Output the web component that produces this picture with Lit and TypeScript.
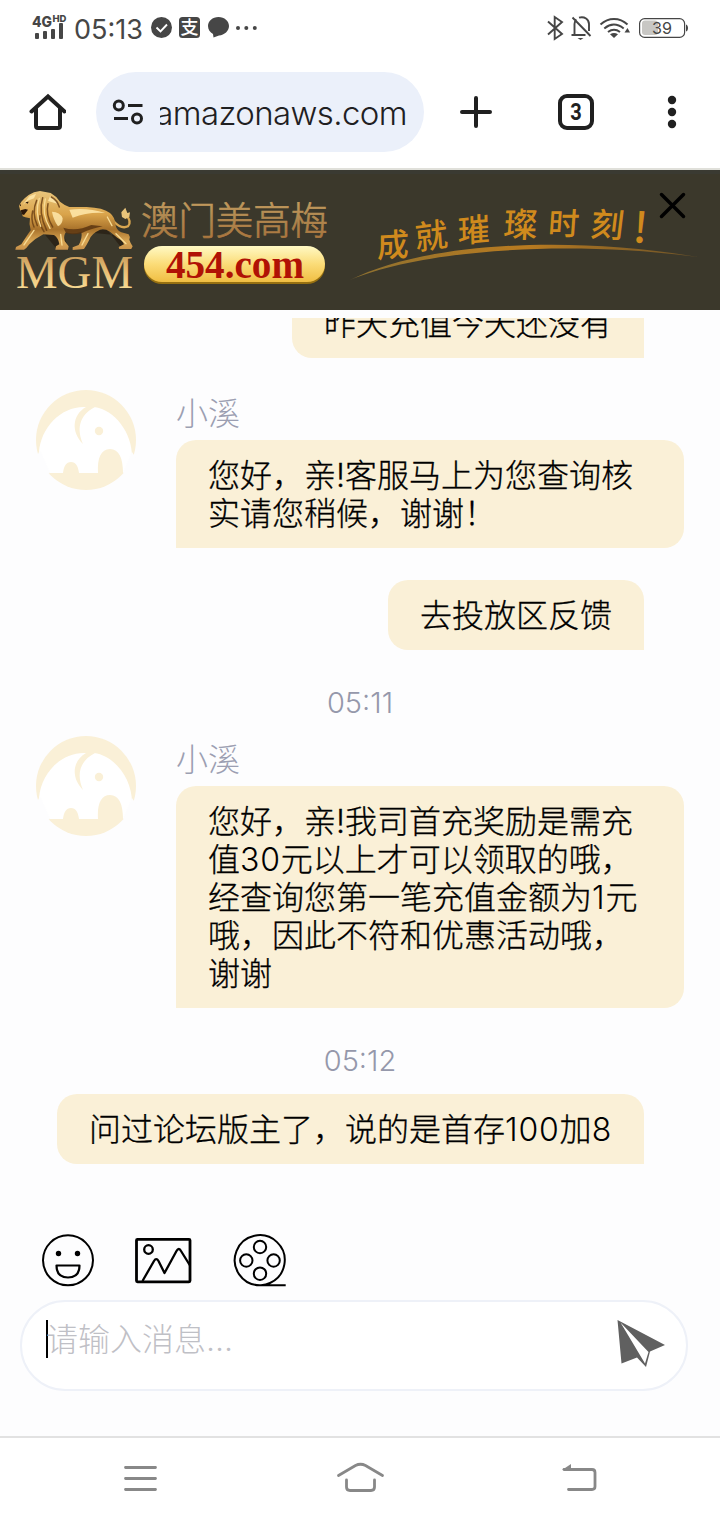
import { LitElement, html, css, svg } from "lit";
import { customElement } from "lit/decorators.js";

type ChatItem =
  | { kind: "agent"; name: string; lines: string[] }
  | { kind: "user"; lines: string[] }
  | { kind: "time"; text: string };

const CHAT: ChatItem[] = [
  { kind: "user", lines: ["昨天充值今天还没有"] },
  {
    kind: "agent",
    name: "小溪",
    lines: ["您好，亲!客服马上为您查询核", "实请您稍候，谢谢！"],
  },
  { kind: "user", lines: ["去投放区反馈"] },
  { kind: "time", text: "05:11" },
  {
    kind: "agent",
    name: "小溪",
    lines: [
      "您好，亲!我司首充奖励是需充",
      "值30元以上才可以领取的哦，",
      "经查询您第一笔充值金额为1元",
      "哦，因此不符和优惠活动哦，",
      "谢谢",
    ],
  },
  { kind: "time", text: "05:12" },
  { kind: "user", lines: ["问过论坛版主了，说的是首存100加8"] },
];

@customElement("status-bar")
export class StatusBar extends LitElement {
  static styles = css`
    :host {
      display: flex;
      justify-content: space-between;
      height: 56px;
      padding: 0 31px 0 31px;
      box-sizing: border-box;
    }
    svg {
      display: block;
    }
    text {
      font-family: Inter, "Noto Sans CJK SC", sans-serif;
      fill: #464646;
    }
    .net {
      font-size: 15px;
      font-weight: 800;
    }
    .hd {
      font-size: 9.5px;
      font-weight: 800;
    }
    .clock {
      font-size: 27px;
      font-weight: 400;
    }
    .pay {
      font-size: 18px;
      font-weight: 500;
      fill: #fff;
    }
    .charge {
      font-size: 16.5px;
    }
  `;

  render() {
    return html`
      <svg width="230" height="56" viewBox="31 0 230 56" fill="#464646">
        <text class="net" x="32" y="26.500" textLength="20" lengthAdjust="spacingAndGlyphs">4G</text>
        <text class="hd" x="52.500" y="22" textLength="14" lengthAdjust="spacingAndGlyphs">HD</text>
        <rect x="35" y="33" width="4" height="6" rx="1" />
        <rect x="43" y="31" width="4" height="8" rx="1" />
        <rect x="51" y="29" width="4" height="10" rx="1" />
        <rect x="59" y="23" width="4" height="16" rx="1" />
        <text class="clock" x="74" y="39" textLength="69" lengthAdjust="spacingAndGlyphs">05:13</text>
        <circle cx="161.500" cy="27.500" r="10.500" />
        <path d="M156.500 27.500l4 4 6.500-7" fill="none" stroke="#fff" stroke-width="1.900" />
        <rect x="179" y="17" width="21" height="21" rx="3.500" />
        <text class="pay" x="180.500" y="34">支</text>
        <path d="M218.500 17c6 0 10.500 4 10.500 9s-4.500 9-10 9.500l-5.500 2-.5-3.500c-3-1.500-5-4.500-5-8 0-5 4.500-9 10.500-9z" />
        <circle cx="238" cy="28" r="2" />
        <circle cx="246.300" cy="28" r="2" />
        <circle cx="254.800" cy="28" r="2" />
      </svg>
      <svg width="150" height="56" viewBox="539 0 150 56" fill="none" stroke="#464646" stroke-width="1.900">
        <path d="M548 21.500l14 12.500-7.300 5V17l7.300 5-14 12.500" />
        <path d="M574.500 35V24c0-2 .7-3.500 1.800-4.700M579 17.600c5.500-1.600 10 1.800 10 6.400v7M571.500 35h14M572.500 17.500l18 18.500" />
        <path d="M577.500 38h6l-3 2z" fill="#464646" stroke="none" />
        <path d="M600.500 24.500c8-7.300 19-7.300 27 0M604.300 28.500c6-5 13-5 19.400 0M608 32c4-3 8-3 12 0" stroke-width="2" />
        <path d="M610 34.200c3-1.600 5-1.600 8 0l-4 3.800z" fill="#464646" stroke="none" />
        <path d="M624.500 32.500l3-4.500 2.500 4.500z" fill="#464646" stroke="none" />
        <rect x="642" y="20.500" width="16" height="14.500" rx="3" fill="#c8c7c4" stroke="none" />
        <rect x="639.600" y="18.600" width="45" height="18.800" rx="5" stroke-width="1.200" />
        <path d="M686 24.500c1.500.5 2 2 2 3.500s-.5 3-2 3.500z" fill="#464646" stroke="none" />
        <text class="charge" x="652" y="34" stroke="none" textLength="20" lengthAdjust="spacingAndGlyphs">39</text>
      </svg>
    `;
  }
}

@customElement("browser-bar")
export class BrowserBar extends LitElement {
  static styles = css`
    :host {
      display: flex;
      align-items: center;
      height: 114px;
      box-sizing: border-box;
      border-bottom: 2px solid #e0e0da;
    }
    svg {
      display: block;
      flex: none;
    }
    .home {
      margin: 0 30px 0 28px;
    }
    .address {
      display: flex;
      align-items: center;
      width: 328px;
      height: 80px;
      border-radius: 40px;
      background: #ebf0fa;
      box-sizing: border-box;
      padding: 2px 17px 0 14px;
      gap: 12px;
    }
    .url {
      display: flex;
      flex: 1;
      justify-content: flex-end;
      overflow: hidden;
      font: 300 33px/44px Inter, sans-serif;
      letter-spacing: -0.6px;
      color: #1f2022;
      white-space: nowrap;
    }
    .actions {
      display: flex;
      flex: 1;
      justify-content: space-between;
      padding: 0 28px 0 32px;
    }
    .tabs {
      margin-left: 4px;
    }
    .count {
      font: 700 23px Roboto, sans-serif;
      fill: #202020;
      stroke: none;
    }
  `;

  render() {
    return html`
      <svg class="home" width="38" height="40" viewBox="28 92 38 40" fill="none" stroke="#202020" stroke-width="4">
        <path d="M31.500 111.500L48 96.500l16.500 15" stroke-linecap="round" />
        <path d="M36 108v18a2 2 0 0 0 2 2h20a2 2 0 0 0 2-2v-18" />
      </svg>
      <div class="address">
        <svg width="38" height="30" viewBox="110 98 38 30" fill="none" stroke="#202020" stroke-width="3">
          <circle cx="118.800" cy="105.500" r="4.500" />
          <path d="M128 105.500h14.500M114 118.500h14" />
          <circle cx="137" cy="118.500" r="4.500" />
        </svg>
        <div class="url"><span>amazonaws.com</span></div>
      </div>
      <div class="actions">
        <svg width="40" height="40" viewBox="456 92 40 40" stroke="#202020" stroke-width="4" stroke-linecap="round">
          <path d="M462 112h28M476 98v28" />
        </svg>
        <svg class="tabs" width="40" height="40" viewBox="556 92 40 40" fill="none" stroke="#202020" stroke-width="4">
          <rect x="560" y="96" width="32" height="32" rx="7" />
          <text class="count" x="570.200" y="120" textLength="11.500" lengthAdjust="spacingAndGlyphs">3</text>
        </svg>
        <svg width="40" height="40" viewBox="652 92 40 40" fill="#202020">
          <circle cx="672" cy="100" r="4.200" />
          <circle cx="672" cy="112" r="4.200" />
          <circle cx="672" cy="124" r="4.200" />
        </svg>
      </div>
    `;
  }
}

// glyph, centre x, centre y, size, rotation
const SLOGAN: [string, number, number, number, number][] = [
  ["成", 393, 75, 32, -4],
  ["就", 432, 66, 33, -8],
  ["璀", 474, 60, 32, -5],
  ["璨", 520, 55, 34, 0],
  ["时", 563, 54, 31, 0],
  ["刻", 606, 55, 33, 3],
];

@customElement("promo-banner")
export class PromoBanner extends LitElement {
  static styles = css`
    :host {
      display: block;
      height: 140px;
      background: #3b382b;
    }
    svg {
      display: block;
    }
    .mgm {
      font: 400 46px "Liberation Serif", serif;
    }
    .brand {
      font: 300 38px "Noto Sans CJK SC", sans-serif;
    }
    .site {
      font: 700 39px "Liberation Serif", serif;
      fill: #b01205;
    }
    .slogan {
      font-family: "Noto Sans CJK SC", sans-serif;
      font-weight: 500;
      fill: #d08a1d;
    }
  `;

  lion() {
    return svg`
      <g transform="translate(10 15) scale(0.3333)">
        <path fill="#23170c" d="M104 148l36 44 36 2-16-50zM230 142l60-10 44 56 34 4-30-40z" opacity="0.600" />
        <path fill="none" stroke="#d9a650" stroke-width="7" d="M310 108q24 26 44 16 12-14-4-32" />
        <path fill="#e9c47a" d="M346 68l-12 14 2 14 10 6 12-6 2-14-8 2z" />
        <path fill="url(#lionBody)" d="M72 22L90 18l32 6q18 10 28 26 12 10 28 16h52q50 2 70 18 14 12 16 32 2 18 18 26l22 6q6 8 2 16 4 12 10 20l-4 8h-36l-2-6 16-8q-4-12-20-20l-22-18q-16-10-30-6-26 12-32 30-8 16-16 28l-34 3v-8l18-7q12-20 8-40-24 8-46 2-8 8-4 26l12 16-2 10h-38l2-10 10-6q-2-18-16-28l-32-2q-24 12-42 30-8 12-16 16H16l2-8 16-8q18-28 28-42-6-18-2-36l-14-3-8-3-2-10-6-10-3-12 7-12 10-10 12-10z" />
        <path fill="#5a3511" opacity="0.850" d="M160 128q40 12 84-8l34 4q-38 8-62 20-26 8-48 0z" />
        <path fill="#ffe9ac" opacity="0.850" d="M178 74q56-6 108 10-52-4-98 14zM126 80q24 0 32 20 0 18-14 24-14-20-18-44zM58 34l20-8-6 14-20 8-14 12zM120 34q16 6 22 22l-28-8z" />
        <path fill="none" stroke="#6d4215" stroke-width="4.500" stroke-linecap="round" opacity="0.850" d="M80 46q-16 36 2 76M98 38q-14 44 12 98M114 56q-8 34 14 70M68 78q-6 26 4 48M90 92q-4 24 12 48M124 36q18 10 24 30" />
        <path fill="none" stroke="#f8dc95" stroke-width="4" stroke-linecap="round" d="M88 40q-14 40 4 84M106 42q-12 46 14 88M72 136l-30 44M152 148l4 32M234 146l-18 34M318 146l30 30M292 96l14 26" />
        <path fill="#2b180b" d="M32 76l14-4 8 2-12 16-6-2zM46 52l10-2-3 6zM28 60l5-2v6z" />
      </g>
    `;
  }

  render() {
    return html`
      <svg width="720" height="140" viewBox="0 0 720 140">
        <defs>
          <linearGradient id="lionBody" x1="0" y1="0" x2="0" y2="1">
            <stop offset="0" stop-color="#eac67c" />
            <stop offset="0.400" stop-color="#d9a34a" />
            <stop offset="0.650" stop-color="#a8722b" />
            <stop offset="0.850" stop-color="#d9a654" />
            <stop offset="1" stop-color="#c8914a" />
          </linearGradient>
          <linearGradient id="mgmFill" x1="0" y1="0" x2="0" y2="1">
            <stop offset="0" stop-color="#b98c50" />
            <stop offset="0.500" stop-color="#e8bf76" />
            <stop offset="1" stop-color="#ffe8a2" />
          </linearGradient>
          <linearGradient id="brandFill" x1="0" y1="0" x2="0" y2="1">
            <stop offset="0" stop-color="#d0a868" />
            <stop offset="0.500" stop-color="#b08850" />
            <stop offset="1" stop-color="#a87038" />
          </linearGradient>
          <linearGradient id="pillFill" x1="0" y1="0" x2="0" y2="1">
            <stop offset="0" stop-color="#fff9c4" />
            <stop offset="0.500" stop-color="#fbdc78" />
            <stop offset="1" stop-color="#f0be43" />
          </linearGradient>
          <linearGradient id="arcFill" x1="0" y1="0" x2="1" y2="0">
            <stop offset="0" stop-color="#8c7030" />
            <stop offset="0.500" stop-color="#b97b20" />
            <stop offset="1" stop-color="#6b5228" />
          </linearGradient>
        </defs>
        <rect width="720" height="4" fill="#3a3a32" />
        ${this.lion()}
        <text class="mgm" x="16" y="117.500" fill="url(#mgmFill)"
          textLength="117" lengthAdjust="spacingAndGlyphs">MGM</text>
        <text class="brand" x="141" y="64" fill="url(#brandFill)" stroke="url(#brandFill)" stroke-width="0.700"
          textLength="187" lengthAdjust="spacingAndGlyphs">澳门美高梅</text>
        <rect x="144" y="78" width="181" height="36" rx="18" fill="#967011" />
        <rect x="144" y="76" width="181" height="36" rx="18" fill="url(#pillFill)" />
        <text class="site" x="166" y="108" textLength="138" lengthAdjust="spacingAndGlyphs">454.com</text>
        <path fill="url(#arcFill)" d="M350 110C420 74.500 560 64 698 87 560 69 420 81 350 110z" />
        ${SLOGAN.map(
          ([glyph, x, y, size, turn]) => svg`
            <text class="slogan" text-anchor="middle" font-size=${size}
              transform="translate(${x} ${y + size * 0.36}) rotate(${turn}) skewX(-4)">${glyph}</text>
          `
        )}
        <text class="slogan" font-size="42" transform="translate(632 72) rotate(5)">!</text>
        <path d="M661.500 24.500l22 22M683.500 24.500l-22 22" stroke="#000" stroke-width="3.500" stroke-linecap="round" />
      </svg>
    `;
  }
}

@customElement("chat-message")
export class ChatMessage extends LitElement {
  static properties = { item: { attribute: false } };
  declare item: ChatItem;

  static styles = css`
    :host {
      display: block;
      font-weight: 300;
    }
    .agent {
      display: flex;
      align-items: flex-start;
      gap: 40px;
      padding-left: 36px;
    }
    .avatar {
      display: block;
      flex: none;
    }
    .name {
      height: 50px;
      line-height: 43px;
      font-size: 32px;
      color: #9c9fb2;
    }
    .bubble {
      padding: 17px 32px 15px;
      background: #faf0d7;
      border-radius: 20px;
      font-family: Inter, "Noto Sans CJK SC", sans-serif;
      font-size: 32px;
      line-height: 38px;
      color: #000;
      -webkit-text-stroke: 0.3px #000;
      white-space: nowrap;
      box-sizing: border-box;
    }
    .agent .bubble {
      width: 508px;
      border-bottom-left-radius: 0;
    }
    .user {
      display: flex;
      justify-content: flex-end;
      padding-right: 76px;
    }
    .user .bubble {
      border-bottom-right-radius: 0;
    }
    .line {
      height: 38px;
    }
    .digits {
      letter-spacing: 0.8px;
      -webkit-text-stroke: 0;
    }
    .time {
      font: 300 29px/38px Inter, sans-serif;
      text-align: center;
      color: #9598ab;
    }
  `;

  line(text: string) {
    const parts = text.split(/(\d+)/);
    return html`<div class="line">${parts.map((part, i) =>
      i % 2 ? html`<span class="digits">${part}</span>` : part
    )}</div>`;
  }

  bubble(lines: string[]) {
    return html`<div class="bubble">${lines.map((text) => this.line(text))}</div>`;
  }

  render() {
    const item = this.item;
    if (item.kind === "time") {
      return html`<div class="time">${item.text}</div>`;
    }
    if (item.kind === "user") {
      return html`<div class="user">${this.bubble(item.lines)}</div>`;
    }
    return html`
      <article class="agent">
        <svg class="avatar" width="100" height="100" viewBox="0 0 100 100">
          <circle cx="50" cy="50" r="50" fill="#faf0d7" />
          <path fill="#fff" d="M14 83C8 77 3 69 3 62 5 38 24 17 48 17h10c22 3 38 27 38 49-1 6-5 13-9 17 0-15-4-24-13-24s-13 9-12 24H43c-1-7-3-11-8-11s-7 4-8 11z" />
          <path fill="#fdfdfe" d="M0 68L4 60 14 83 0 90zM100 68l-4-6-9 21 13 7z" />
          <path fill="#faf0d7" d="M50 17c-14 8-15 25-3 37-6-14-5-28 12-37z" />
          <circle cx="63" cy="41" r="4.200" fill="#faf0d7" />
        </svg>
        <div>
          <div class="name">${item.name}</div>
          ${this.bubble(item.lines)}
        </div>
      </article>
    `;
  }
}

@customElement("message-composer")
export class MessageComposer extends LitElement {
  static styles = css`
    :host {
      display: block;
      padding: 0 32px 0 20px;
    }
    svg {
      display: block;
    }
    .tools {
      display: flex;
      align-items: center;
      height: 80px;
      padding-left: 20px;
      gap: 38px;
      box-sizing: border-box;
    }
    .field {
      display: flex;
      justify-content: space-between;
      height: 91px;
      padding: 18px 20px 0 24px;
      border: 2px solid #eef1f8;
      border-radius: 46px;
      background: #fff;
      box-sizing: border-box;
    }
    .placeholder {
      height: 38px;
      border-left: 2px solid #000;
      font-family: Inter, "Noto Sans CJK SC", sans-serif;
      font-size: 32px;
      font-weight: 300;
      line-height: 40px;
      text-indent: -2px;
      color: #bfc0c6;
    }
  `;

  render() {
    return html`
      <div class="tools">
        <svg width="56" height="56" viewBox="40 1232 56 56" fill="none" stroke="#000" stroke-width="2">
          <circle cx="68" cy="1260.300" r="25" />
          <circle cx="58.500" cy="1253.500" r="2.700" fill="#000" stroke="none" />
          <circle cx="77.500" cy="1253.500" r="2.700" fill="#000" stroke="none" />
          <path d="M56.500 1265.500h23c0 8-4 12-11.500 12s-11.500-4-11.500-12z" stroke-width="2.200" stroke-linejoin="round" />
        </svg>
        <svg width="58" height="56" viewBox="134 1232 58 56" fill="none" stroke="#000" stroke-width="2.800" stroke-linejoin="round">
          <rect x="136.500" y="1239.300" width="53.500" height="42.500" rx="1" />
          <circle cx="148.500" cy="1249.500" r="4.300" stroke-width="2.300" />
          <path d="M142.500 1281l11.500-20c1.500-2.500 3-2.500 4.500 0l6 12 12-22c1.500-2.700 3.200-2.700 4.500 0l9 14.500" stroke-width="2.300" />
        </svg>
        <svg width="58" height="56" viewBox="230 1232 58 56" fill="none" stroke="#000" stroke-width="2">
          <path d="M285.700 1285.200H260a25 25 0 1 1 10-2.200q-4 2-9 2.200" />
          <circle cx="260" cy="1247" r="6.200" />
          <circle cx="246.300" cy="1260.500" r="6.200" />
          <circle cx="273.600" cy="1260.500" r="6.200" />
          <circle cx="260" cy="1273.700" r="6.200" />
        </svg>
      </div>
      <div class="field">
        <div class="placeholder">请输入消息...</div>
        <svg width="50" height="50" viewBox="616 1320 50 50" fill="#606060">
          <path fill-rule="evenodd" d="M617.500 1320l47.500 25-15 6.500-4 15.500-9-9.500-15.500 6zM620.500 1322.500l24.500 41 3.500-11.500z" />
        </svg>
      </div>
    `;
  }
}

@customElement("app-root")
export class AppRoot extends LitElement {
  static styles = css`
    :host {
      display: flex;
      flex-direction: column;
      width: 720px;
      height: 1520px;
      overflow: hidden;
      background: #fff;
      font-family: "Noto Sans CJK SC", sans-serif;
    }
    .page {
      height: 1126px;
      padding-top: 8px;
      box-sizing: border-box;
      background: #fdfdfe;
    }
    .chat {
      display: flex;
      flex-direction: column;
      justify-content: flex-end;
      height: 902px;
      padding-bottom: 56px;
      box-sizing: border-box;
      overflow: hidden;
    }
    .chat > * {
      flex: none;
      margin-top: 32px;
    }
    .chat > .time {
      margin-top: 34px;
      margin-bottom: -18px;
    }
    .nav {
      display: flex;
      justify-content: space-between;
      align-items: center;
      flex: 1;
      padding: 0 120px 2px;
      border-top: 2px solid #e2e2e2;
    }
  `;

  render() {
    return html`
      <status-bar></status-bar>
      <browser-bar></browser-bar>
      <promo-banner></promo-banner>
      <main class="page">
        <div class="chat">
          ${CHAT.map((item) => html`<chat-message class=${item.kind} .item=${item}></chat-message>`)}
        </div>
        <message-composer></message-composer>
      </main>
      <nav class="nav">
        <svg width="40" height="40" viewBox="120 1458 40 40" fill="none" stroke="#888" stroke-width="2.800" stroke-linecap="round">
          <path d="M125.500 1467.500h30M125.500 1478.500h30M125.500 1489.500h30" />
        </svg>
        <svg width="50" height="40" viewBox="335 1458 50 40" fill="none" stroke="#888" stroke-width="2.800" stroke-linecap="round">
          <path d="M338.500 1475.500l17-10q5-2.500 10 0l17 10" />
          <path d="M346.500 1480v7q0 3.500 3.500 3.500h21q3.500 0 3.500-3.500v-7" />
        </svg>
        <svg width="40" height="40" viewBox="560 1458 40 40" fill="none" stroke="#888" stroke-width="2.800" stroke-linecap="round">
          <path d="M564 1469.500h28q3 0 3 3v14q0 3-3 3h-23.500" />
          <path d="M562 1470l9-6v6z" fill="#888" stroke="none" />
        </svg>
      </nav>
    `;
  }
}
